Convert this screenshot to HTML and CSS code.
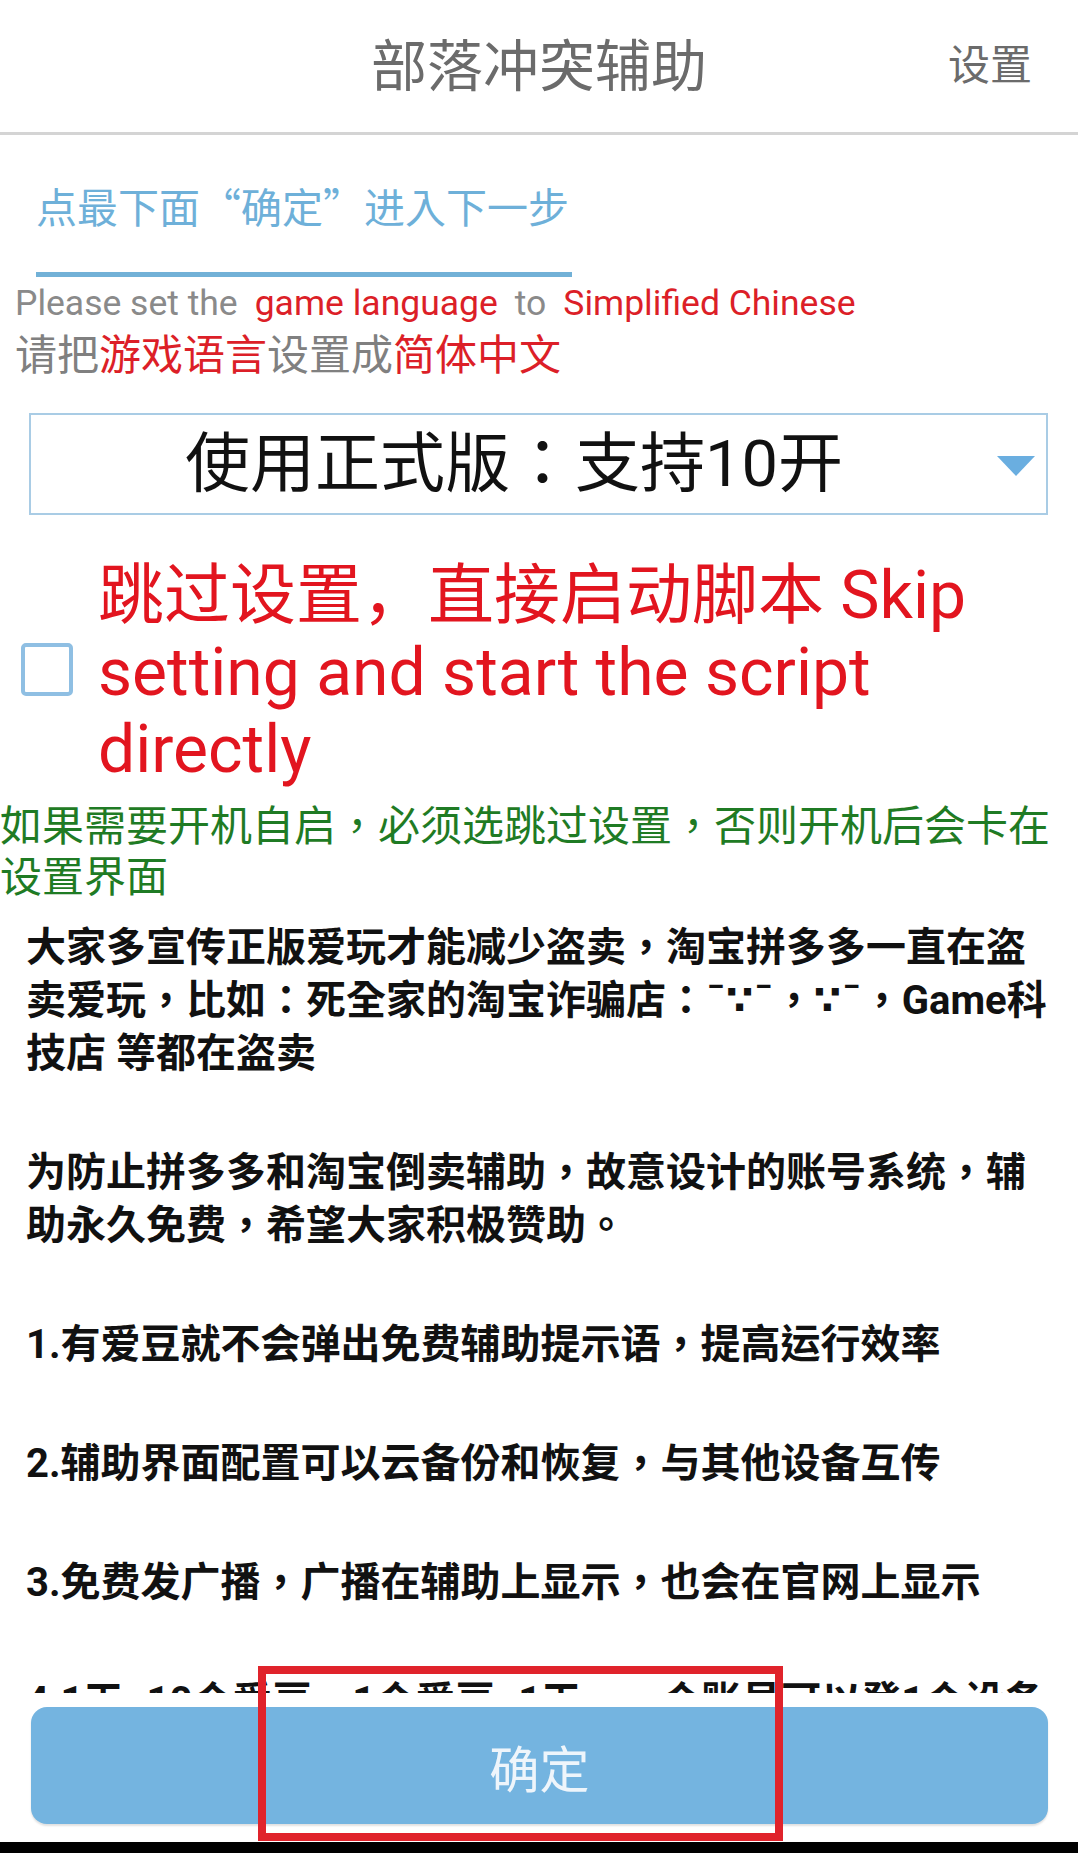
FILE: index.html
```html
<!DOCTYPE html>
<html>
<head>
<meta charset="utf-8">
<title>部落冲突辅助</title>
<link rel="stylesheet" href="styles.css">
</head>
<body>
<div class="screen">
  <header class="appbar">
    <span class="appbar-side"></span>
    <h1 class="appbar-title">部落冲突辅助</h1>
    <span class="appbar-action">设置</span>
  </header>

  <main class="content">
    <div class="tab"><span class="tab-label">点最下面“确定”进入下一步</span></div>

    <p class="lang-en">Please set the<span class="hl">game language</span>to<span class="hl">Simplified Chinese</span></p>
    <p class="lang-zh">请把<span class="hl-zh">游戏语言</span>设置成<span class="hl-zh">简体中文</span></p>

    <div class="select">
      <span class="select-value">使用正式版：支持10开</span>
      <span class="select-arrow"></span>
    </div>

    <div class="skip">
      <span class="checkbox"></span>
      <span class="skip-text">跳过设置，直接启动脚本 Skip setting and start the script directly</span>
    </div>

    <p class="notice">如果需要开机自启，必须选跳过设置，否则开机后会卡在设置界面</p>

    <div class="info">
      <p>大家多宣传正版爱玩才能减少盗卖，淘宝拼多多一直在盗卖爱玩，比如：死全家的淘宝诈骗店：¯∵¯，∵¯，Game科技店 等都在盗卖</p>
      <p>为防止拼多多和淘宝倒卖辅助，故意设计的账号系统，辅助永久免费，希望大家积极赞助。</p>
      <p>1.有爱豆就不会弹出免费辅助提示语，提高运行效率</p>
      <p>2.辅助界面配置可以云备份和恢复，与其他设备互传</p>
      <p>3.免费发广播，广播在辅助上显示，也会在官网上显示</p>
      <p>4.1天=10个爱豆，1个爱豆=1天，一个账号可以登1个设备</p>
    </div>
  </main>

  <footer class="footer">
    <button class="confirm" type="button">确定</button>
  </footer>
  <div class="navbar"></div>

  <div class="highlight-box"></div>
</div>
</body>
</html>
```

FILE: styles.css
```css
* {
  box-sizing: border-box;
}

html,
body {
  margin: 0;
  padding: 0;
  background: #ffffff;
}

body {
  font-family: Roboto, "Noto Sans CJK TC", "Noto Sans CJK SC", sans-serif;
}

.screen {
  position: relative;
  width: 1078px;
  height: 1853px;
  display: flex;
  flex-direction: column;
  overflow: hidden;
  background: #ffffff;
}

/* ---------- app bar ---------- */
.appbar {
  flex: 0 0 135px;
  display: grid;
  grid-template-columns: 1fr auto 1fr;
  align-items: center;
  border-bottom: 3px solid #d4d4d4;
  padding-bottom: 2px;
}

.appbar-title {
  margin: 0 0 6px 0;
  font-family: "Noto Sans CJK TC", sans-serif;
  font-weight: 400;
  font-size: 56px;
  line-height: 70px;
  color: #6b6b6b;
}

.appbar-action {
  justify-self: end;
  padding-right: 46px;
  font-family: "Noto Sans CJK TC", sans-serif;
  font-size: 42px;
  line-height: 60px;
  color: #6b6b6b;
  margin-bottom: 6px;
}

/* ---------- content ---------- */
.content {
  flex: 1 1 auto;
  overflow: hidden;
  min-height: 0;
}

.tab {
  width: 536px;
  margin-left: 36px;
  padding-top: 40px;
  padding-bottom: 37px;
  border-bottom: 5px solid #72b1d7;
}

.tab-label {
  display: block;
  font-family: "Noto Sans CJK TC", sans-serif;
  font-size: 41px;
  line-height: 60px;
  color: #6eb0d9;
  white-space: nowrap;
}

.lang-en {
  margin: 4px 0 0 15px;
  font-size: 35.5px;
  line-height: 44px;
  color: #8a8a8a;
  white-space: nowrap;
}

.hl {
  color: #dc1f28;
  margin: 0 17px;
}

.lang-zh {
  margin: 2px 0 0 15px;
  font-family: "Noto Sans CJK TC", sans-serif;
  font-size: 42px;
  line-height: 50px;
  color: #808080;
}

.hl-zh {
  color: #dc1f28;
}

/* ---------- select ---------- */
.select {
  margin: 36px 30px 0 29px;
  height: 102px;
  border: 2px solid #a9cce5;
  display: flex;
  align-items: center;
}

.select-value {
  flex: 1 1 auto;
  text-align: center;
  font-size: 65px;
  line-height: 74px;
  color: #111111;
  white-space: nowrap;
}

.select-arrow {
  flex: 0 0 auto;
  width: 0;
  height: 0;
  margin: 4px 11px 0 0;
  border-left: 19px solid transparent;
  border-right: 19px solid transparent;
  border-top: 20px solid #6aaee0;
}

/* ---------- skip checkbox ---------- */
.skip {
  display: flex;
  align-items: center;
  gap: 25px;
  margin: 42px 0 0 21px;
}

.checkbox {
  flex: 0 0 52px;
  width: 52px;
  height: 53px;
  border: 4px solid #8fbfe3;
  border-radius: 5px;
  margin-top: -6px;
}

.skip-text {
  font-family: Roboto, "Noto Sans CJK SC", sans-serif;
  font-size: 66px;
  line-height: 77px;
  color: #e2151f;
}

.notice {
  margin: 9px 0 0 0;
  font-family: "Noto Sans CJK TC", sans-serif;
  font-size: 42px;
  line-height: 51px;
  color: #1f7b24;
}

/* ---------- info ---------- */
.info {
  padding: 0 14px 0 26px;
  margin-top: 22px;
}

.info p {
  margin: 0 0 66px 0;
  font-family: Roboto, "DejaVu Sans", "Noto Sans CJK TC", sans-serif;
  font-size: 40px;
  line-height: 53px;
  font-weight: 700;
  color: #111111;
}

/* ---------- footer ---------- */
.footer {
  flex: 0 0 149px;
  padding: 14px 30px 18px 31px;
  background: #ffffff;
}

.confirm {
  display: block;
  width: 100%;
  height: 117px;
  border: none;
  border-radius: 16px;
  background: #74b4e0;
  box-shadow: 0 2px 2px rgba(0, 0, 0, 0.12);
  font-family: "Noto Sans CJK TC", sans-serif;
  font-size: 50px;
  color: #eef5fb;
  padding: 0;
}

.navbar {
  flex: 0 0 11px;
  background: #000000;
}

/* annotation overlay */
.highlight-box {
  position: absolute;
  left: 258px;
  top: 1666px;
  width: 525px;
  height: 175px;
  border: 8px solid #e0232b;
  pointer-events: none;
}
```
